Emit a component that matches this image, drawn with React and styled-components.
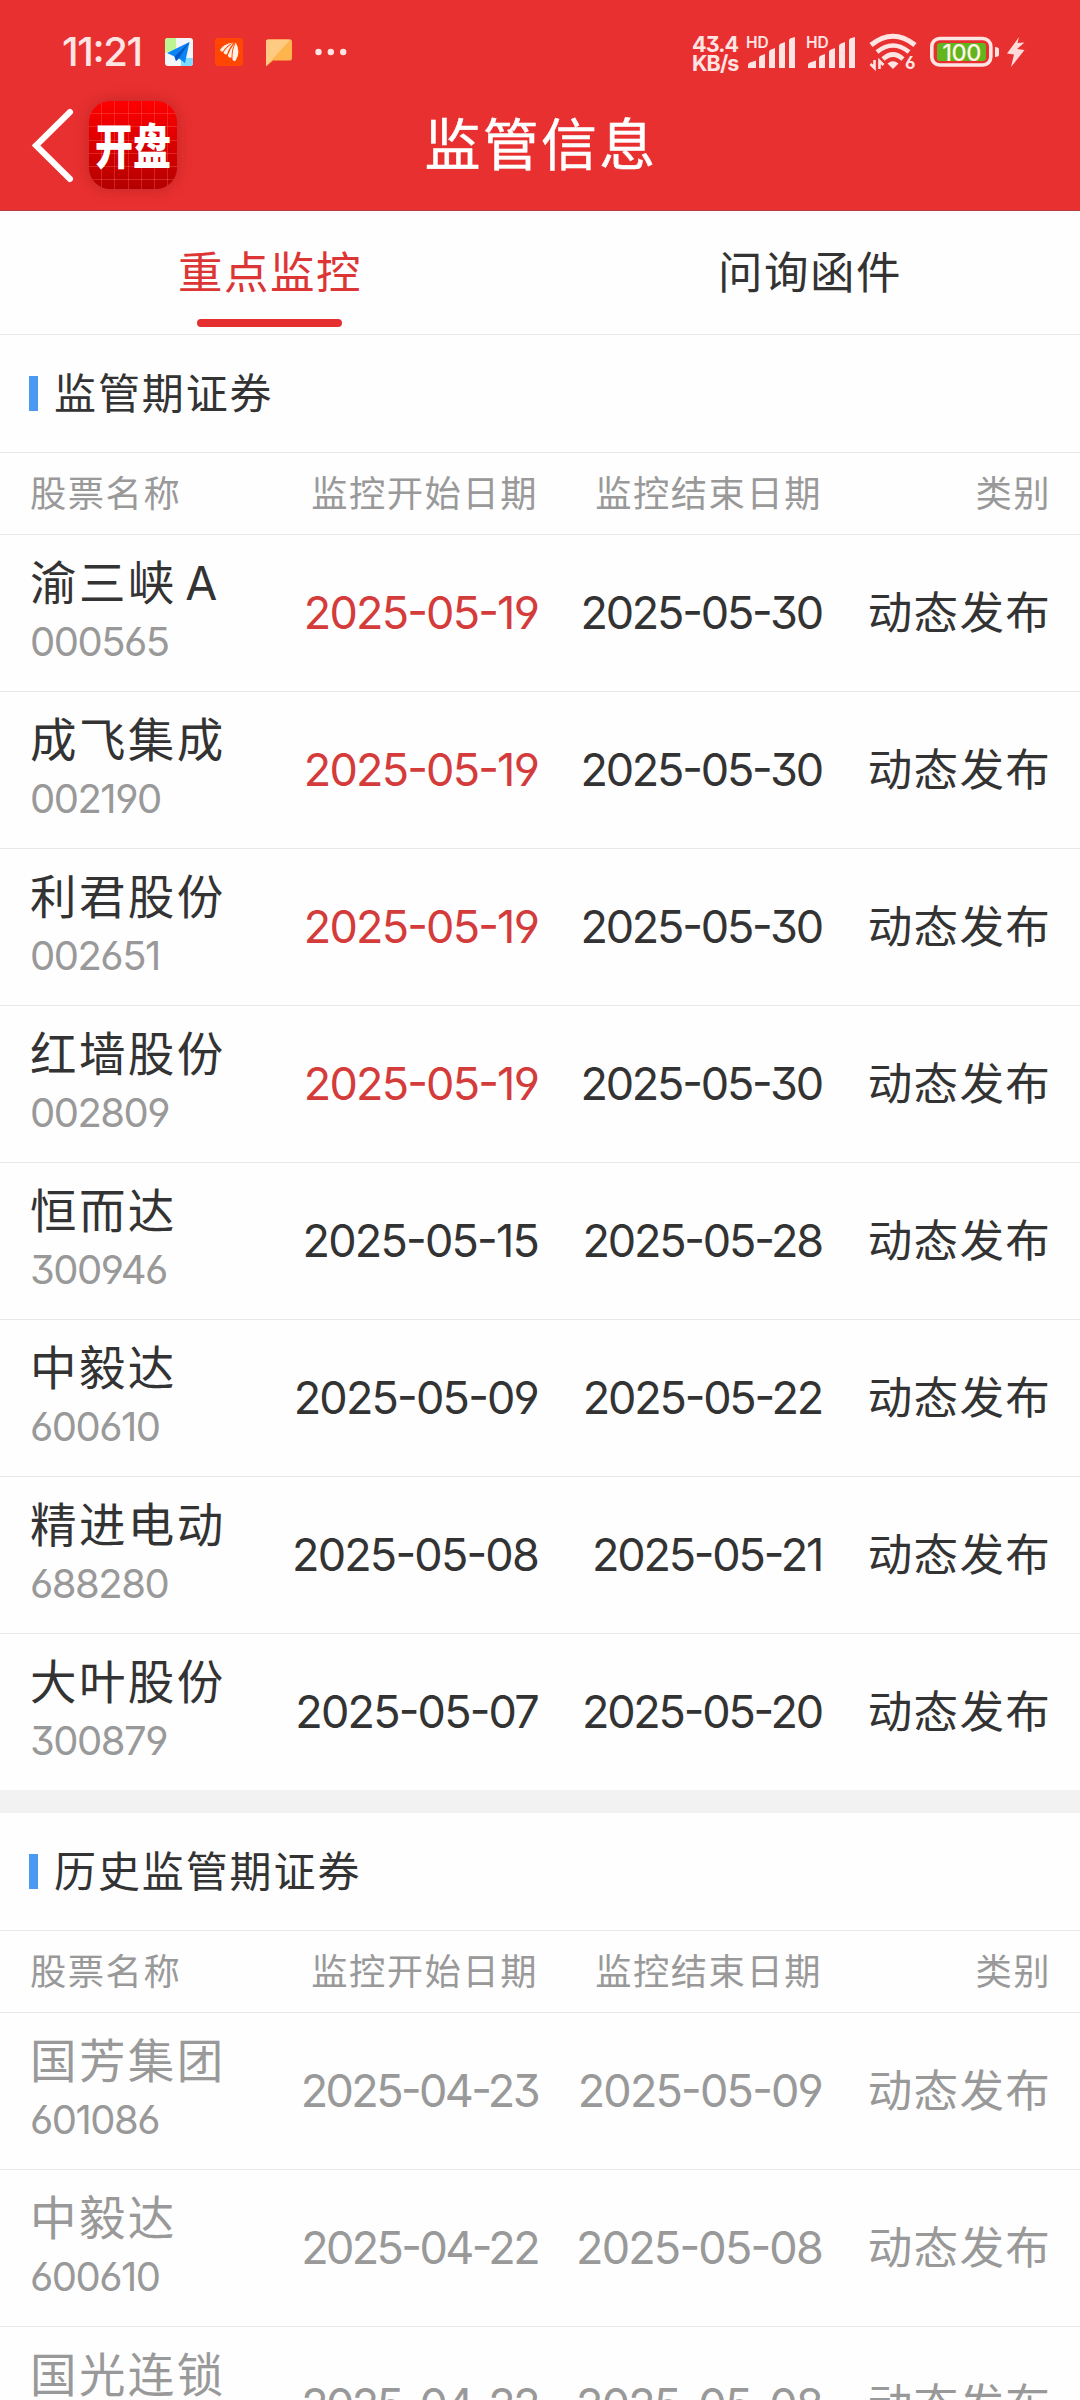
import React from "react";
import styled, { createGlobalStyle } from "styled-components";

const GlobalStyle = createGlobalStyle`
  * {
    box-sizing: border-box;
  }
  body {
    margin: 0;
    background: #fefefe;
    font-family: Inter, "Noto Sans CJK SC", sans-serif;
    font-feature-settings: "cv03", "cv04", "cv09", "case";
    color: #333333;
  }
`;

const Page = styled.div`
  width: 1080px;
  height: 2400px;
  overflow: hidden;
  background: #fefefe;
`;

// Header styled component

const HeaderWrap = styled.header`
  height: 211px;
  background: #e83030;
  border-bottom: 1px solid #b33f42;
`;

const StatusBar = styled.div`
  display: flex;
  justify-content: space-between;
  height: 101px;
  padding: 0 53px 0 62px;
  color: #ffe4e4;
`;

const StatusSide = styled.div`
  display: flex;
  height: 104px;
  align-items: center;
`;

const Clock = styled.span`
  width: 103px;
  font-size: 40px;
  font-weight: 500;
  letter-spacing: -1.4px;
  line-height: 40px;
`;

const NoticeIcon = styled.svg`
  display: block;
  width: 28px;
  height: 28px;
  margin-right: 22px;
`;

const DotsIcon = styled.svg`
  display: block;
  width: 32px;
  height: 8px;
`;

const NetSpeed = styled.div`
  width: 54px;
  padding-top: 4px;
  font-size: 21.5px;
  font-weight: 700;
  letter-spacing: -0.9px;
  line-height: 19px;
  white-space: nowrap;
`;

const SignalIcon = styled.svg`
  display: block;
  width: 50px;
  height: 36px;
  margin-right: 10px;
`;

const WifiIcon = styled.svg`
  display: block;
  width: 48px;
  height: 38px;
  margin-left: 3px;
`;

const BatteryIcon = styled.svg`
  display: block;
  width: 98px;
  height: 34px;
  margin-left: 12px;
`;

const NavBar = styled.div`
  display: grid;
  grid-template-columns: 300px 1fr 300px;
  height: 88px;
  align-items: center;
`;

const NavLeft = styled.div`
  display: flex;
  align-items: center;
  padding-left: 31px;
`;

const BackIcon = styled.svg`
  display: block;
  width: 44px;
  height: 80px;
  margin-right: 14px;
`;

const AppLogo = styled.div`
  display: flex;
  justify-content: center;
  align-items: center;
  width: 88px;
  height: 88px;
  border-radius: 21px;
  background:
    repeating-linear-gradient(
      90deg,
      transparent 0 12.2px,
      rgba(255, 120, 120, 0.3) 12.2px 13.2px
    ),
    repeating-linear-gradient(
      transparent 0 12.2px,
      rgba(255, 120, 120, 0.3) 12.2px 13.2px
    ),
    linear-gradient(#ff0000, #b40000);
  box-shadow: 0 0 14px rgba(120, 20, 20, 0.35);
`;

const LogoText = styled.span`
  padding-bottom: 2px;
  color: #ffffff;
  font-family: "Noto Sans CJK SC", sans-serif;
  font-size: 38px;
  font-weight: 900;
  line-height: 50px;
  transform: scaleY(1.27);
`;

const NavTitle = styled.h1`
  margin: 0;
  padding-left: 2px;
  text-align: center;
  color: #ffffff;
  font-size: 56px;
  font-weight: 400;
  letter-spacing: 2.2px;
  line-height: 80px;
  -webkit-text-stroke: 0.5px #ffffff;
`;

// Tab styled component

const TabWrap = styled.nav`
  display: grid;
  grid-template-columns: 1fr 1fr;
  height: 124px;
  border-bottom: 1px solid #e8e8e8;
`;

const TabBtn = styled.button`
  display: flex;
  flex-direction: column;
  align-items: center;
  padding: 28px 0 0;
  background: inherit;
  border: none;
  cursor: pointer;
  font: inherit;
  font-size: 44.5px;
  letter-spacing: 1.5px;
  line-height: 68px;
  color: ${({ $active }) => ($active ? "#dc3535" : "#333333")};

  &::after {
    content: "";
    width: 145px;
    height: 8px;
    margin: 12px 2px 0 0;
    border-radius: 4px;
    background: ${({ $active }) => ($active ? "#e43030" : "transparent")};
  }
`;

// Table styled component

const SectionTitle = styled.h2`
  display: flex;
  align-items: center;
  height: 118px;
  margin: 0;
  padding-left: 29px;
  border-bottom: 1px solid #e8e8e8;
  font-size: 42px;
  font-weight: 400;
  letter-spacing: 1.9px;

  &::before {
    content: "";
    width: 9px;
    height: 35px;
    margin-right: 16px;
    background: #4a9af4;
  }
`;

const TitleText = styled.span`
  padding-bottom: 7px;
`;

const Row = styled.div`
  display: grid;
  grid-template-columns: 230px 278px 284px 1fr;
  align-items: center;
  height: 157px;
  padding: 0 29px 0 30px;
  border-bottom: 1px solid #e8e8e8;
  color: ${({ $muted }) => ($muted ? "#999999" : "#333333")};

  &:last-child {
    height: 156px;
    border-bottom: none;
  }
`;

const HeadRow = styled(Row)`
  height: 82px;
  padding-bottom: 5px;
  color: #999999;
  font-size: 36.3px;
  letter-spacing: 1.5px;
`;

const HeadCell = styled.span`
  text-align: ${({ $align }) => $align || "right"};
  white-space: nowrap;
`;

const Stock = styled.div`
  height: 130px;
`;

const StockName = styled.div`
  font-size: 46.5px;
  letter-spacing: 2.4px;
  word-spacing: -7px;
  line-height: 71px;
  white-space: nowrap;
`;

const StockCode = styled.div`
  color: #999999;
  font-size: 40px;
  letter-spacing: -1.5px;
  line-height: 46px;
`;

const DateCell = styled.span`
  padding-bottom: 1px;
  text-align: right;
  font-size: 45px;
  letter-spacing: ${({ $gap }) => $gap || "-2.2px"};
  white-space: nowrap;
  color: ${({ $hot }) => ($hot ? "#d43b3b" : "inherit")};
`;

const KindCell = styled.span`
  padding-bottom: 7px;
  text-align: right;
  font-size: 44.5px;
  letter-spacing: 1.3px;
  white-space: nowrap;
`;

const Divider = styled.div`
  height: 23px;
  background: #f2f2f2;
`;

const watching = [
  { name: "渝三峡 A", code: "000565", start: "2025-05-19", end: "2025-05-30", hot: true },
  { name: "成飞集成", code: "002190", start: "2025-05-19", end: "2025-05-30", hot: true },
  { name: "利君股份", code: "002651", start: "2025-05-19", end: "2025-05-30", hot: true },
  { name: "红墙股份", code: "002809", start: "2025-05-19", end: "2025-05-30", hot: true },
  { name: "恒而达", code: "300946", start: "2025-05-15", end: "2025-05-28" },
  { name: "中毅达", code: "600610", start: "2025-05-09", end: "2025-05-22" },
  { name: "精进电动", code: "688280", start: "2025-05-08", end: "2025-05-21" },
  { name: "大叶股份", code: "300879", start: "2025-05-07", end: "2025-05-20" },
];

const history = [
  { name: "国芳集团", code: "601086", start: "2025-04-23", end: "2025-05-09" },
  { name: "中毅达", code: "600610", start: "2025-04-22", end: "2025-05-08" },
  { name: "国光连锁", code: "", start: "2025-04-22", end: "2025-05-08" },
];

function Signal() {
  return (
    <SignalIcon viewBox="0 0 50 36" fill="#ffe4e4">
      <text x="0" y="14" fontSize="15.5" fontWeight="600" fontFamily="Inter">
        HD
      </text>
      <path d="M2 34v-3q0-2 2-2.600l6-2V34zM13 34V24q0-1.500 1.500-2.200L19 20v14zM23 34V18q0-1.500 1.500-2.200L29 14v20zM33 34V12q0-1.500 1.500-2.200L39 8v26zM43 34V6.500q0-1.500 1.500-2.200L49 3v31z" />
    </SignalIcon>
  );
}

function Wifi() {
  return (
    <WifiIcon viewBox="0 0 48 38" fill="none" stroke="#ffe4e4">
      <path d="M2 12Q24-5.500 46 12" strokeWidth="5" />
      <path d="M8 19Q24 6 40 19" strokeWidth="4.600" />
      <path d="M14 26Q24 17 34 26" strokeWidth="4.600" />
      <path d="M24 36l-5.500-5.500q5.500-4.500 11 0z" fill="#ffe4e4" stroke="none" />
      <path d="M5.500 27v8l-4-4M10.500 36v-8l4 4" strokeWidth="2.600" />
      <text x="36" y="35.500" fontSize="17" fontWeight="700" fontFamily="Inter" fill="#ffe4e4" stroke="none">
        6
      </text>
    </WifiIcon>
  );
}

function Battery() {
  return (
    <BatteryIcon viewBox="0 0 98 34">
      <rect x="2.800" y="3.500" width="59" height="26.500" rx="8" fill="none" stroke="#ffe4e4" strokeWidth="3.600" />
      <rect x="8" y="8" width="49" height="18" rx="3" fill="#62b51d" />
      <text x="32.500" y="25.500" textAnchor="middle" fontSize="23.500" fontWeight="500" fontFamily="Inter" letterSpacing="-0.500" fill="#fff4e6">
        100
      </text>
      <path d="M66 12q4 0 4 2.500v5q0 2.500-4 2.500z" fill="#ffe4e4" />
      <path d="M90 2L78 18.500l7 1L82 32l13.500-17-7.500-1 7.500-6.500-7 .5z" fill="#ffdada" />
    </BatteryIcon>
  );
}

function Header() {
  return (
    <HeaderWrap>
      <StatusBar>
        <StatusSide>
          <Clock>11:21</Clock>
          <NoticeIcon viewBox="0 0 28 28">
            <rect width="28" height="28" rx="3" fill="#f2f6f8" />
            <path d="M3 0h8v11L0 15V3q0-3 3-3z" fill="#bdf593" />
            <path d="M16 28v-8h12v5q0 3-3 3z" fill="#7ddcff" />
            <path d="M24.500 4L2 15l7.500 3.500 1.500 4.500 3-2.500 6 4.500z" fill="#0a84f5" />
            <path d="M24.500 4L9.500 18.500 11 23l3-3z" fill="#0757c8" />
          </NoticeIcon>
          <NoticeIcon viewBox="0 0 28 28">
            <rect width="28" height="28" rx="3" fill="#ff4703" />
            <g fill="#fff1e4">
              <path d="M18 4.500Q8 6 5 12q.5 2 3 1.500Q12 7 18 4.500z" />
              <path d="M19 4.500Q11.500 9 8.500 14.500q1 2.500 3.500 1.800Q14 9.500 19 4.500z" />
              <path d="M20 4.500Q15 11 12.800 17.500q1 2.800 3.700 2Q16.500 11 20 4.500z" />
              <path d="M20.800 4.500Q16.800 13 17.500 21.500q1.500 3 3.200 1Q26 14 20.800 4.500z" />
            </g>
          </NoticeIcon>
          <NoticeIcon viewBox="0 0 28 28">
            <path d="M1 28.500V3.500q0-2 2-2h22q2 0 2 2v17q0 2-2 2H8z" fill="#ffb54d" />
            <path d="M1 28.500V3.500q0-2 2-2h22.500L7 21.500z" fill="#ffcb83" />
          </NoticeIcon>
          <DotsIcon viewBox="0 0 32 8" fill="#ffe4e4">
            <circle cx="3.500" cy="4" r="3.200" />
            <circle cx="15.800" cy="4" r="3.200" />
            <circle cx="28.200" cy="4" r="3.200" />
          </DotsIcon>
        </StatusSide>
        <StatusSide>
          <NetSpeed>
            43.4
            <br />
            KB/s
          </NetSpeed>
          <Signal />
          <Signal />
          <Wifi />
          <Battery />
        </StatusSide>
      </StatusBar>
      <NavBar>
        <NavLeft>
          <BackIcon viewBox="0 0 44 80" fill="none" stroke="#ffffff" strokeWidth="6" strokeLinecap="round">
            <path d="M39 7L5 40.500 39 74" />
          </BackIcon>
          <AppLogo>
            <LogoText>开盘</LogoText>
          </AppLogo>
        </NavLeft>
        <NavTitle>监管信息</NavTitle>
      </NavBar>
    </HeaderWrap>
  );
}

function StockTable({ title, rows, muted }) {
  return (
    <section>
      <SectionTitle>
        <TitleText>{title}</TitleText>
      </SectionTitle>
      <HeadRow>
        <HeadCell $align="left">股票名称</HeadCell>
        <HeadCell>监控开始日期</HeadCell>
        <HeadCell>监控结束日期</HeadCell>
        <HeadCell>类别</HeadCell>
      </HeadRow>
      {rows.map((row) => (
        <Row key={row.name} $muted={muted}>
          <Stock>
            <StockName>{row.name}</StockName>
            <StockCode>{row.code}</StockCode>
          </Stock>
          <DateCell $hot={row.hot} $gap={muted ? "-2.6px" : "-1.8px"}>
            {row.start}
          </DateCell>
          <DateCell $gap={muted && "-1.8px"}>{row.end}</DateCell>
          <KindCell>动态发布</KindCell>
        </Row>
      ))}
    </section>
  );
}

export default function App() {
  return (
    <Page>
      <GlobalStyle />
      <Header />
      <TabWrap>
        <TabBtn $active>重点监控</TabBtn>
        <TabBtn>问询函件</TabBtn>
      </TabWrap>
      <StockTable title="监管期证券" rows={watching} />
      <Divider />
      <StockTable title="历史监管期证券" rows={history} muted />
    </Page>
  );
}
